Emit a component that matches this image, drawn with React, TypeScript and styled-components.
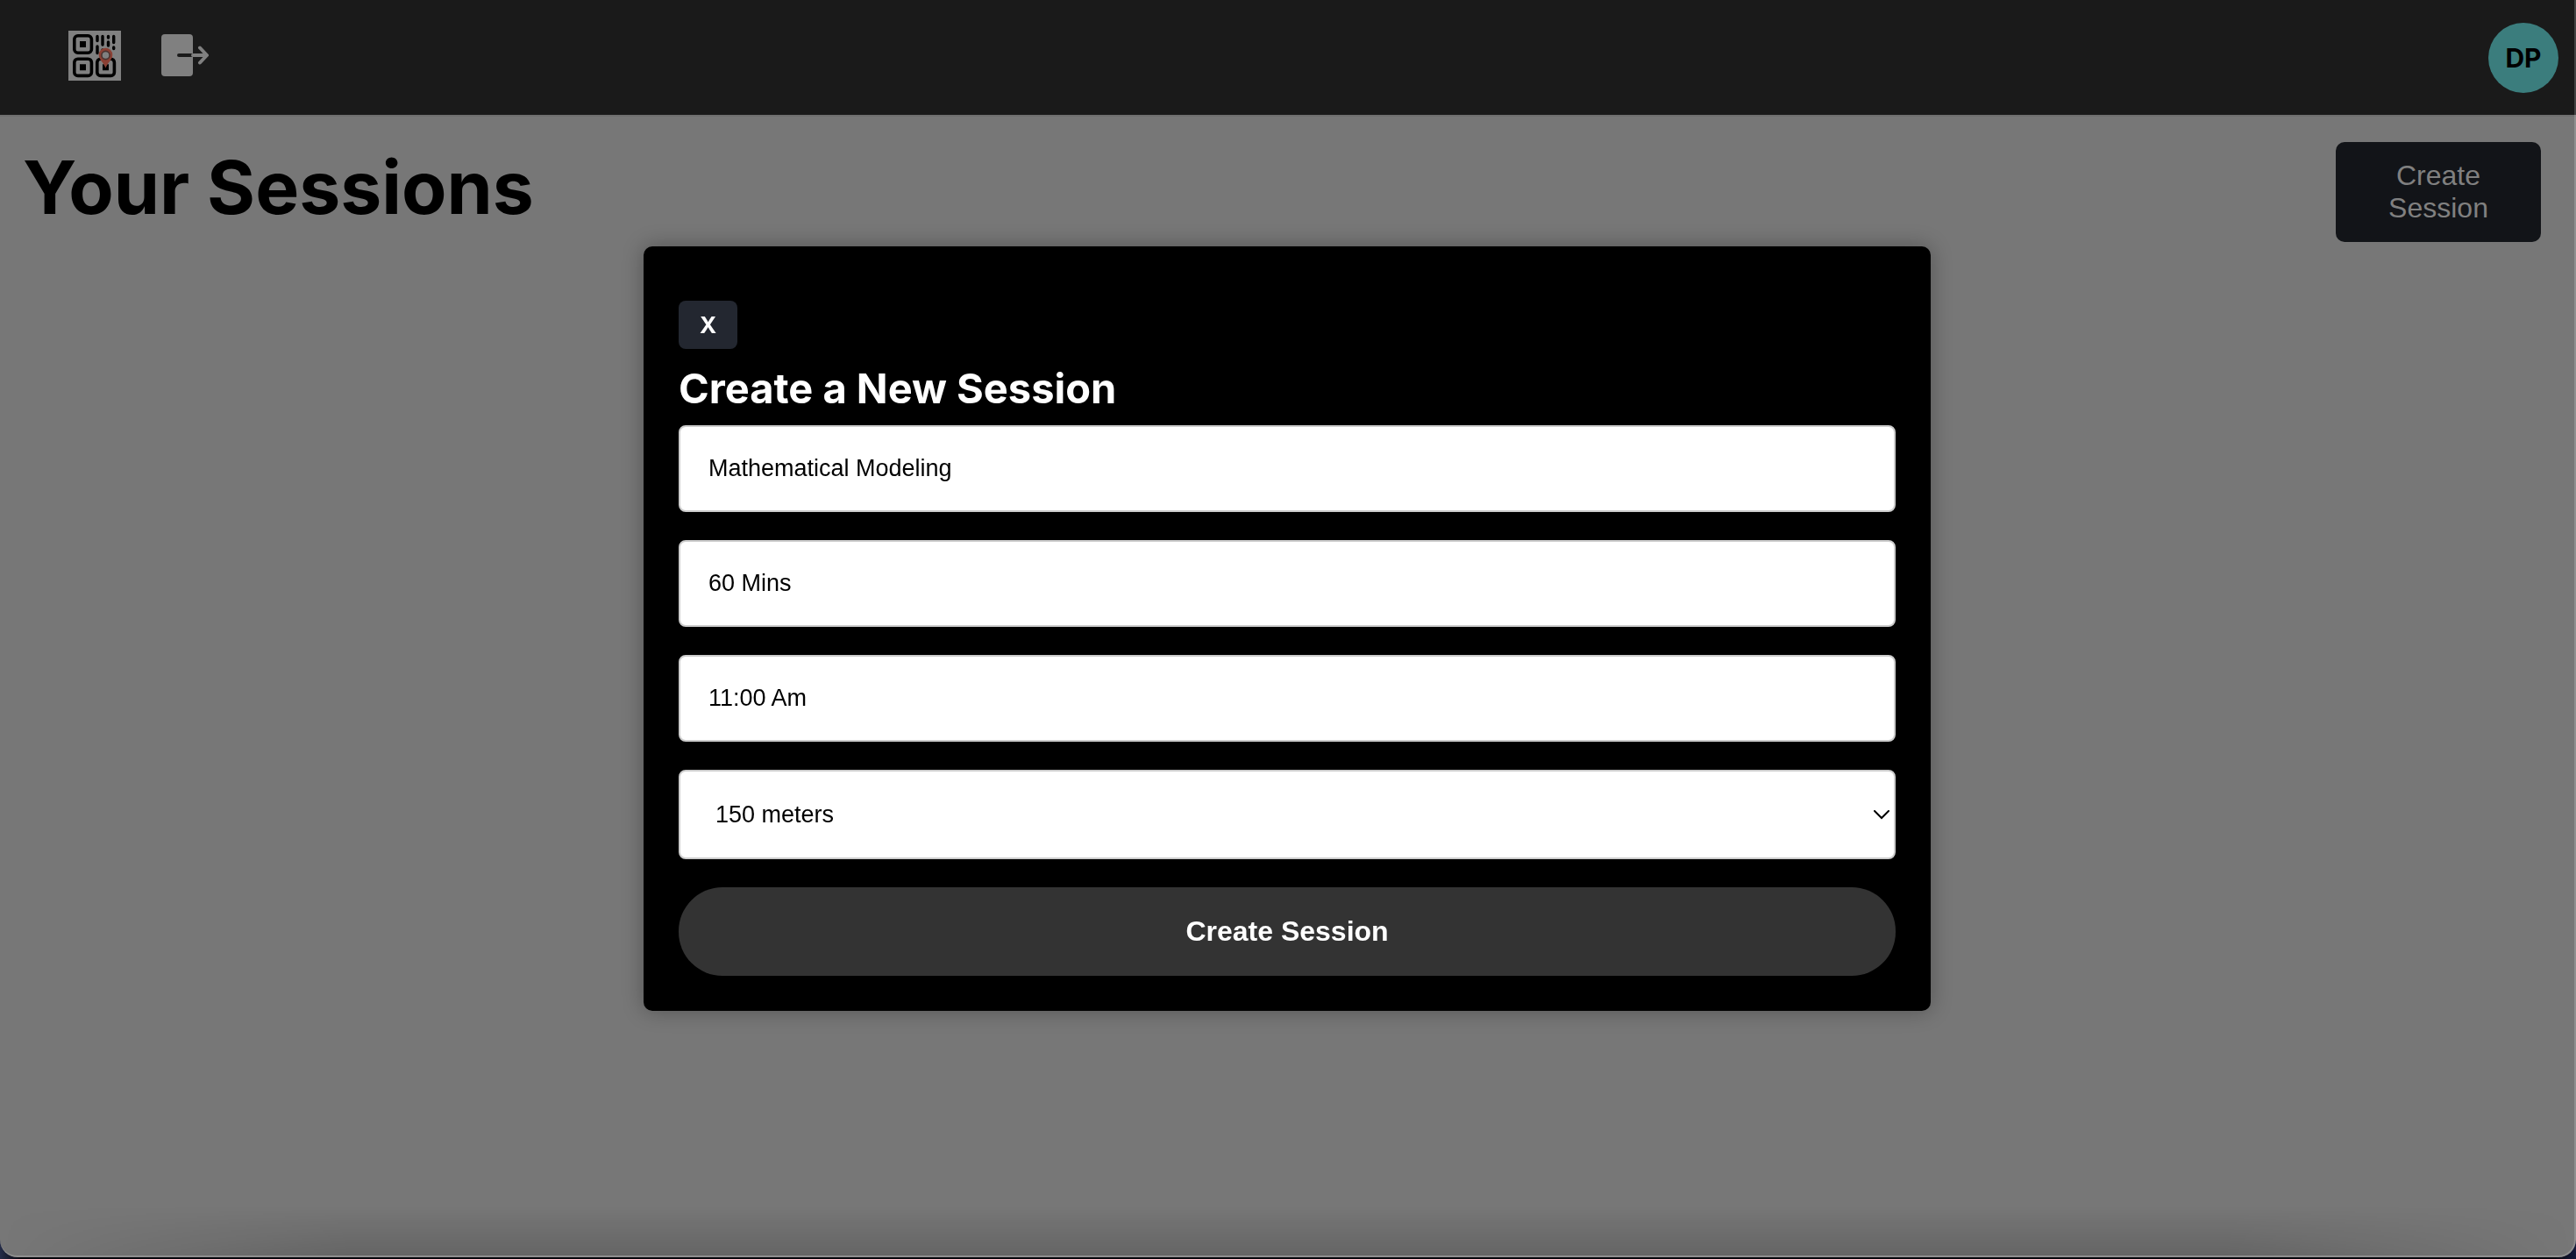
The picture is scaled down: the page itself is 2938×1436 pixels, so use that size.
import React, { useState } from "react";
import styled, { createGlobalStyle } from "styled-components";

const sans = `"Liberation Sans", Arial, sans-serif`;
const ui = `Inter, "Liberation Sans", sans-serif`;

const GlobalStyle = createGlobalStyle`
  *, *::before, *::after { box-sizing: border-box; }
  html {
    min-height: 100vh;
    background: linear-gradient(to right, #252c48, #06060c 24px, #06060c calc(100% - 24px), #14183a);
  }
  body { margin: 0; font-family: ${ui}; color: #000; }
  h1, h2 { margin: 0; }
`;

const Frame = styled.div`
  display: flex;
  flex-direction: column;
  height: calc(100vh - 2px);
  background: #777;
  border-radius: 0 0 20px 20px;
  overflow: hidden;
`;

const FrameEdge = styled.div`
  position: fixed;
  inset: 0 0 2px 0;
  border-radius: 0 0 20px 20px;
  border-right: 2px solid rgba(255, 255, 255, 0.18);
  border-bottom: 2px solid rgba(255, 255, 255, 0.18);
  pointer-events: none;

  &::after {
    content: "";
    position: absolute;
    inset: auto 0 0 0;
    height: 56px;
    background: linear-gradient(to top, rgba(0, 0, 0, 0.15), transparent);
    mask-image: linear-gradient(to right, transparent, #000 400px, #000 calc(100% - 400px), transparent);
  }
`;

const Header = styled.header`
  display: flex;
  align-items: center;
  justify-content: space-between;
  height: 133px;
  padding: 0 20px 0 78px;
  background: #1a1a1a;
  border-bottom: 2px solid #6f6f6f;
`;

const Nav = styled.nav`
  display: flex;
  align-items: center;
  gap: 44px;
  padding-bottom: 4px;
`;

const IconLink = styled.a`
  display: flex;
`;

const Avatar = styled.button`
  width: 80px;
  height: 80px;
  padding: 0;
  border: 0;
  border-radius: 50%;
  background: #3b7d7d;
  color: #000;
  font: 700 30px/36px ${ui};
`;

const PageHead = styled.main`
  display: flex;
  align-items: flex-start;
  justify-content: space-between;
  padding: 29px 40px 0 26px;
`;

const PageTitle = styled.h1`
  font-size: 84px;
  line-height: 104px;
  font-weight: 700;
`;

const OpenButton = styled.button`
  width: 234px;
  padding: 20px 40px;
  border: 0;
  border-radius: 10px;
  background: #121418;
  color: #808080;
  font: 400 32px/37px ${sans};
`;

const Backdrop = styled.div`
  position: fixed;
  inset: 0 2px 2px 0;
  display: flex;
  align-items: center;
  justify-content: center;
`;

const Dialog = styled.section`
  display: flex;
  flex-direction: column;
  align-items: flex-start;
  width: 50%;
  padding: 62px 40px 40px;
  border-radius: 10px;
  background: #000;
  box-shadow: 0 0 24px rgba(0, 0, 0, 0.3);
`;

const CloseButton = styled.button`
  padding: 12px 24px;
  border: 0;
  border-radius: 8px;
  background: #232730;
  color: #fff;
  font: 700 26px/31px ${ui};
`;

const DialogTitle = styled.h2`
  margin: 15px 0 12px;
  color: #fff;
  font-size: 47px;
  line-height: 60px;
  font-weight: 700;
`;

const Form = styled.form`
  display: flex;
  flex-direction: column;
  gap: 32px;
  width: 100%;
`;

const Field = styled.label`
  display: flex;
  position: relative;
`;

const fieldLook = `
  width: 100%;
  border: 2px solid #ccc;
  border-radius: 8px;
  background: #fff;
  color: #000;
  font: 400 27px/31px ${sans};
`;

const TextInput = styled.input`
  ${fieldLook}
  height: 99px;
  padding: 0 32px;
`;

const Select = styled.select`
  ${fieldLook}
  height: 102px;
  padding: 0 40px;
  appearance: none;
`;

const Chevron = styled.svg`
  position: absolute;
  right: 7px;
  top: 46px;
  pointer-events: none;
`;

const SubmitButton = styled.button`
  height: 101px;
  border: 0;
  border-radius: 50px;
  background: #333;
  color: #fff;
  font: 700 32px/37px ${sans};
`;

const QrLogo = () => (
  <svg width="60" height="57" viewBox="0 0 60 57" aria-hidden="true">
    <rect width="60" height="57" fill="#808080" />
    <g fill="none" stroke="#000" strokeWidth="3.6">
      <rect x="6.8" y="5.8" width="19.6" height="19.4" rx="4" />
      <rect x="6.8" y="32.2" width="19.6" height="19.2" rx="4" />
      <rect x="32.8" y="32.2" width="19.6" height="19.2" rx="4" />
    </g>
    <path d="M13 12h7v7h-7zM13 38.3h7v7h-7zM39 38.3h7v7h-7z" />
    <path
      d="M33 6.5v5M39 6.5v9.5M45.5 6.5v1.5M45.5 13v4M51.7 6.5v7M33 18v7.5M39 22v3M51.7 19v1.5"
      stroke="#000"
      strokeWidth="3.4"
      strokeLinecap="round"
    />
    <path d="M42.5 42.5C40 36 34.7 33 34.7 27.5a7.8 7.8 0 0 1 15.6 0C50.3 33 45 36 42.5 42.5Z" fill="#8a4034" />
    <circle cx="42.5" cy="28" r="4.6" fill="#808080" stroke="#4a3330" strokeWidth="1.6" />
  </svg>
);

const LeaveIcon = () => (
  <svg width="56" height="50" viewBox="0 0 56 50" aria-hidden="true">
    <rect x="2" y="0" width="36" height="48" rx="4" fill="#808080" />
    <path d="M22 24H38" stroke="#1a1a1a" strokeWidth="4" strokeLinecap="round" />
    <path
      d="M38 24H53M46 15.5L54 24L46 32.5"
      fill="none"
      stroke="#808080"
      strokeWidth="4"
      strokeLinejoin="round"
      strokeLinecap="round"
    />
  </svg>
);

export default function App() {
  const [name, setName] = useState("Mathematical Modeling");
  const [duration, setDuration] = useState("60 Mins");
  const [time, setTime] = useState("11:00 Am");

  return (
    <>
      <GlobalStyle />
      <Frame>
        <Header>
          <Nav>
            <IconLink href="#home" aria-label="Home"><QrLogo /></IconLink>
            <IconLink href="#logout" aria-label="Log out"><LeaveIcon /></IconLink>
          </Nav>
          <Avatar type="button">DP</Avatar>
        </Header>
        <PageHead>
          <PageTitle>Your Sessions</PageTitle>
          <OpenButton type="button">Create Session</OpenButton>
        </PageHead>
      </Frame>
      <FrameEdge />
      <Backdrop>
        <Dialog role="dialog" aria-modal="true" aria-labelledby="dialog-title">
          <CloseButton type="button">X</CloseButton>
          <DialogTitle id="dialog-title">Create a New Session</DialogTitle>
          <Form onSubmit={(e) => e.preventDefault()}>
            <Field>
              <TextInput aria-label="Session name" value={name} onChange={(e) => setName(e.target.value)} />
            </Field>
            <Field>
              <TextInput aria-label="Duration" value={duration} onChange={(e) => setDuration(e.target.value)} />
            </Field>
            <Field>
              <TextInput aria-label="Start time" value={time} onChange={(e) => setTime(e.target.value)} />
            </Field>
            <Field>
              <Select aria-label="Radius" defaultValue="150">
                <option value="150">150 meters</option>
              </Select>
              <Chevron width="18" height="11" viewBox="0 0 18 11" aria-hidden="true">
                <path d="M1 1L9 9L17 1" fill="none" stroke="#000" strokeWidth="2" strokeLinecap="round" />
              </Chevron>
            </Field>
            <SubmitButton type="submit">Create Session</SubmitButton>
          </Form>
        </Dialog>
      </Backdrop>
    </>
  );
}
